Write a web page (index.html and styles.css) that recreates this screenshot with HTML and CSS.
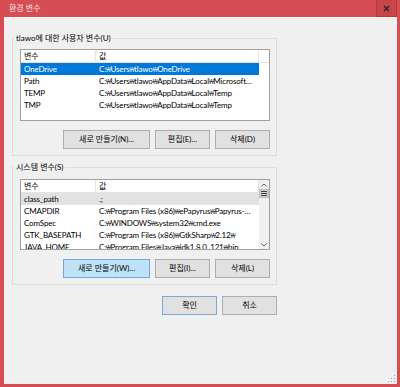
FILE: index.html
```html
<!DOCTYPE html>
<html lang="ko">
<head>
  <meta charset="UTF-8">
  <title>환경 변수</title>
  <link rel="stylesheet" href="styles.css">
</head>
<body>
  <div class="window">
    <div class="titlebar">
      <span class="title">환경 변수</span>
      <div class="close">
        <svg width="7" height="7" viewBox="0 0 7 7"><path d="M1 1 L6 6 M6 1 L1 6" stroke="#3a2222" stroke-width="1.6"/></svg>
      </div>
    </div>
    <div class="client">
      <fieldset class="group">
        <legend>tlawo에 대한 사용자 변수(U)</legend>
        <div class="listview">
          <div class="lv-main">
            <div class="lv-head"><div class="col-name">변수</div><div class="col-value">값</div></div>
            <div class="lv-row selected"><div class="col-name">OneDrive</div><div class="col-value">C:<span class="won">₩</span>Users<span class="won">₩</span>tlawo<span class="won">₩</span>OneDrive</div></div>
            <div class="lv-row"><div class="col-name">Path</div><div class="col-value">C:<span class="won">₩</span>Users<span class="won">₩</span>tlawo<span class="won">₩</span>AppData<span class="won">₩</span>Local<span class="won">₩</span>Microsoft<span class="won">₩</span>WindowsApps;</div></div>
            <div class="lv-row"><div class="col-name">TEMP</div><div class="col-value">C:<span class="won">₩</span>Users<span class="won">₩</span>tlawo<span class="won">₩</span>AppData<span class="won">₩</span>Local<span class="won">₩</span>Temp</div></div>
            <div class="lv-row"><div class="col-name">TMP</div><div class="col-value">C:<span class="won">₩</span>Users<span class="won">₩</span>tlawo<span class="won">₩</span>AppData<span class="won">₩</span>Local<span class="won">₩</span>Temp</div></div>
          </div>
          <div class="lv-side"><div class="lv-head-filler"></div></div>
        </div>
        <div class="btn-row">
          <button class="btn btn-wide">새로 만들기(N)...</button>
          <button class="btn">편집(E)...</button>
          <button class="btn">삭제(D)</button>
        </div>
      </fieldset>

      <fieldset class="group group-system">
        <legend>시스템 변수(S)</legend>
        <div class="listview listview-short">
          <div class="lv-main">
            <div class="lv-head"><div class="col-name">변수</div><div class="col-value">값</div></div>
            <div class="lv-row inactive"><div class="col-name">class_path</div><div class="col-value">.;</div></div>
            <div class="lv-row"><div class="col-name">CMAPDIR</div><div class="col-value">C:<span class="won">₩</span>Program Files (x86)<span class="won">₩</span>ePapyrus<span class="won">₩</span>Papyrus-PlugIn<span class="won">₩</span>cmap</div></div>
            <div class="lv-row"><div class="col-name">ComSpec</div><div class="col-value">C:<span class="won">₩</span>WINDOWS<span class="won">₩</span>system32<span class="won">₩</span>cmd.exe</div></div>
            <div class="lv-row"><div class="col-name">GTK_BASEPATH</div><div class="col-value">C:<span class="won">₩</span>Program Files (x86)<span class="won">₩</span>GtkSharp<span class="won">₩</span>2.12<span class="won">₩</span></div></div>
            <div class="lv-row"><div class="col-name">JAVA_HOME</div><div class="col-value">C:<span class="won">₩</span>Program Files<span class="won">₩</span>Java<span class="won">₩</span>jdk1.8.0_121<span class="won">₩</span>bin</div></div>
          </div>
          <div class="lv-side scrollbar">
            <div class="sb-arrow">
              <svg width="6" height="4" viewBox="0 0 6 4"><polyline points="0.5,3.5 3,1 5.5,3.5" fill="none" stroke="#606060" stroke-width="1"/></svg>
            </div>
            <div class="sb-thumb">
              <svg width="6" height="5" viewBox="0 0 6 5"><path d="M0 0.5 H6 M0 2.5 H6 M0 4.5 H6" stroke="#404040" stroke-width="1"/></svg>
            </div>
            <div class="sb-track"></div>
            <div class="sb-arrow">
              <svg width="6" height="4" viewBox="0 0 6 4"><polyline points="0.5,0.5 3,3 5.5,0.5" fill="none" stroke="#606060" stroke-width="1"/></svg>
            </div>
          </div>
        </div>
        <div class="btn-row">
          <button class="btn btn-wide btn-hover">새로 만들기(W)...</button>
          <button class="btn">편집(I)...</button>
          <button class="btn">삭제(L)</button>
        </div>
      </fieldset>

      <div class="dialog-buttons">
        <button class="btn btn-default">확인</button>
        <button class="btn">취소</button>
      </div>

      <svg class="grip" width="9" height="7" viewBox="0 0 9 7">
        <rect x="7" y="0" width="1" height="1" fill="#a0a0a0"/>
        <rect x="4" y="3" width="1" height="1" fill="#a0a0a0"/>
        <rect x="7" y="3" width="1" height="1" fill="#a0a0a0"/>
        <rect x="1" y="6" width="1" height="1" fill="#a0a0a0"/>
        <rect x="4" y="6" width="1" height="1" fill="#a0a0a0"/>
        <rect x="7" y="6" width="1" height="1" fill="#a0a0a0"/>
      </svg>
    </div>
  </div>
</body>
</html>
```

FILE: styles.css
```css
/* Base */
* {
  margin: 0;
  padding: 0;
  box-sizing: border-box;
}

body {
  font-family: Lato, "Noto Sans CJK KR", sans-serif;
  font-size: 8px;
  color: #000;
  width: 400px;
  height: 387px;
  overflow: hidden;
}

/* Window frame */
.window {
  display: flex;
  flex-direction: column;
  width: 400px;
  height: 387px;
  background-color: #d64e54;
}

.titlebar {
  display: flex;
  align-items: center;
  height: 17px;
  flex-shrink: 0;
}

.title {
  padding-left: 9px;
  color: rgba(255, 255, 255, 0.85);
  line-height: 17px;
}

.close {
  display: flex;
  justify-content: center;
  align-items: center;
  width: 21px;
  height: 17px;
  margin-left: auto;
  margin-right: 3px;
  background-color: #c8454a;
  border: 1px solid #b8383d;
  border-top: none;
}

.client {
  position: relative;
  flex: 1;
  margin: 0 3px 3px 4px;
  padding-left: 8px;
  padding-top: 15px;
  background-color: #f0f0f0;
}

/* Group boxes */
.group {
  width: 265px;
  border: 1px solid #dcdcdc;
  padding: 5px 6px 6px 7px;
  min-inline-size: 0;
}

.group legend {
  margin-left: -6px;
  padding: 0 2px;
  height: 12px;
  line-height: 12px;
}

.group-system {
  margin-top: 5px;
  padding-top: 6px;
}

/* List views */
.listview {
  display: flex;
  width: 250px;
  height: 72px;
  border: 1px solid #a0a0a0;
  background-color: #fff;
  overflow: hidden;
}

.listview-short {
  height: 71px;
}

.lv-main {
  width: 238px;
  flex-shrink: 0;
}

.lv-side {
  width: 10px;
  flex-shrink: 0;
}

.lv-head {
  display: flex;
  height: 13px;
  border-bottom: 1px solid #e5e5e5;
  line-height: 12px;
}

.lv-head .col-name,
.lv-head .col-value {
  border-right: 1px solid #e5e5e5;
}

.lv-head-filler {
  height: 13px;
  border-bottom: 1px solid #e5e5e5;
}

.lv-row {
  display: flex;
  height: 12px;
  line-height: 12px;
  letter-spacing: -0.15px;
}

.lv-row.selected {
  background-color: #0078d7;
  color: #fff;
}

.lv-row.inactive {
  background-color: #e2e2e2;
}

.col-name,
.col-value {
  padding-left: 3px;
  white-space: nowrap;
  overflow: hidden;
  text-overflow: ellipsis;
}

.col-name {
  width: 75px;
}

.col-value {
  width: 163px;
  padding-right: 4px;
}

/* narrow won sign, used as path separator */
.won {
  font-family: "Noto Sans", "DejaVu Sans", sans-serif;
  font-weight: 300;
  letter-spacing: -0.6px;
}

/* Scrollbar */
.scrollbar {
  display: flex;
  flex-direction: column;
  background-color: #f0f0f0;
}

.sb-arrow {
  display: flex;
  justify-content: center;
  align-items: center;
  height: 9px;
}

.sb-thumb {
  display: flex;
  justify-content: center;
  align-items: center;
  height: 9px;
  background-color: #d2d2d2;
  border: 1px solid #bcbcbc;
}

.sb-track {
  flex: 1;
}

/* Buttons */
.btn-row,
.dialog-buttons {
  display: flex;
  justify-content: flex-end;
  gap: 5px;
}

.btn-row {
  margin-top: 9px;
}

.dialog-buttons {
  width: 265px;
  margin-top: 11px;
}

.btn {
  width: 55px;
  height: 19px;
  font-family: inherit;
  font-size: 8px;
  color: #000;
  background-color: #e1e1e1;
  border: 1px solid #adadad;
  line-height: 17px;
}

.btn-wide {
  width: 87px;
}

.btn-hover {
  background-color: #bee3f8;
  border-color: #6fa8dc;
}

.btn-default {
  border-color: #7aaad8;
}

.grip {
  position: absolute;
  right: 1px;
  bottom: 2px;
}
```
